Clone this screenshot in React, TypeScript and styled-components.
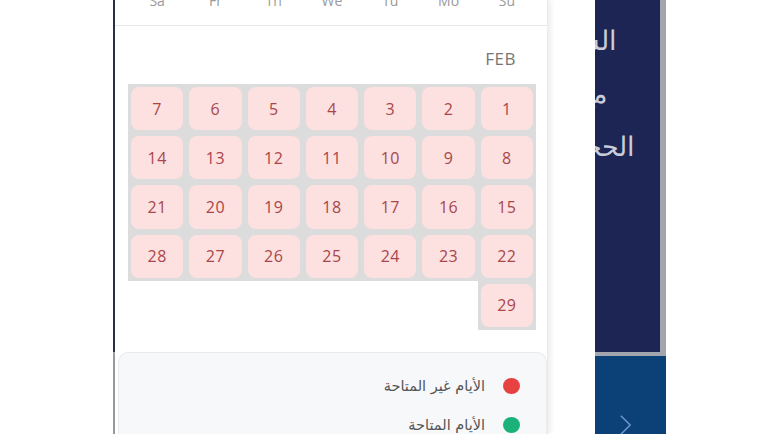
import React from "react";
import styled, { createGlobalStyle } from "styled-components";

const GlobalStyle = createGlobalStyle`
  html, body {
    margin: 0;
    padding: 0;
    background: #ffffff;
    overflow: hidden;
  }
  body {
    font-family: "Open Sans", "Noto Sans", "DejaVu Sans", sans-serif;
  }
`;

const weekDays = ["Su", "Mo", "Tu", "We", "Th", "Fr", "Sa"];
const days = Array.from({ length: 29 }, (_, i) => i + 1);

const heroLines = [
  { text: "السياحة", end: 43 },
  { text: "مع", end: 53 },
  { text: "الحجوزات", end: 25 },
];

const App = () => {
  return (
    <Page>
      <GlobalStyle />
      <Hero>
        <HeroTop>
          {heroLines.map((l) => (
            <HeroLine key={l.text} $end={l.end}>
              {l.text}
            </HeroLine>
          ))}
        </HeroTop>
        <HeroBottom>
          <Chevron viewBox="0 0 14 24">
            <path d="M2 2 L12 12 L2 22" />
          </Chevron>
        </HeroBottom>
      </Hero>

      <Sheet>
        <Modal>
          <Calendar>
            <WeekHeader>
              {weekDays.map((d) => (
                <WeekDay key={d}>{d}</WeekDay>
              ))}
            </WeekHeader>
            <MonthLabel>FEB</MonthLabel>
            <DaysGrid>
              {days.map((d) => (
                <Slot key={d}>
                  <DayCell>{d}</DayCell>
                </Slot>
              ))}
            </DaysGrid>
          </Calendar>

          <Legend>
            <LegendItem>
              <Dot $color="#e84141" />
              <LegendText>الأيام غير المتاحة</LegendText>
            </LegendItem>
            <LegendItem>
              <Dot $color="#1bb27a" />
              <LegendText>الأيام المتاحة</LegendText>
            </LegendItem>
          </Legend>
        </Modal>
      </Sheet>
    </Page>
  );
};

const Page = styled.div`
  position: relative;
  width: 772px;
  height: 434px;
  padding-left: 113px;
  box-sizing: border-box;
  overflow: hidden;
`;

const Hero = styled.div`
  width: 553px;
  height: 434px;
  display: flex;
  flex-direction: column;
`;

const HeroTop = styled.div`
  height: 352px;
  background: #1d2554;
  border-left: 2px solid #2b3048;
  border-right: 6px solid #a2a5ae;
  box-sizing: border-box;
  padding-top: 22px;
  display: flex;
  flex-direction: column;
  gap: 17px;
  direction: rtl;
`;

const HeroLine = styled.div<{ $end: number }>`
  padding-right: ${(p) => p.$end}px;
  font-size: 27px;
  line-height: 36px;
  color: #c9ccd9;
  font-weight: 300;
  white-space: nowrap;
`;

const HeroBottom = styled.div`
  flex: 1;
  background: #0c4177;
  border-top: 4px solid #a2a5ae;
  border-left: 2px solid #9a9a9a;
  display: flex;
  justify-content: flex-end;
  align-items: flex-end;
  padding-right: 34px;
`;

const Chevron = styled.svg`
  width: 13px;
  height: 24px;
  margin-bottom: -3px;
  fill: none;
  stroke: #6d98cc;
  stroke-width: 1.6;
`;

const Sheet = styled.div`
  position: absolute;
  top: 0;
  left: 115px;
  width: 480px;
  height: 434px;
  background: #ffffff;
`;

const Modal = styled.div`
  width: 433px;
  height: 100%;
  display: flex;
  flex-direction: column;
  box-shadow: 3px 0 5px rgba(0, 0, 0, 0.07);
  border-right: 1px solid #ececec;
  box-sizing: border-box;
`;

const Calendar = styled.div`
  padding: 0 11px 0 13px;
  direction: rtl;
`;

const WeekHeader = styled.div`
  display: grid;
  grid-template-columns: repeat(7, 1fr);
  margin: -9px -11px 0 -13px;
  padding: 0 11px 14px 13px;
  border-bottom: 1px solid #e6e6e6;
`;

const WeekDay = styled.div`
  text-align: center;
  font-size: 14px;
  line-height: 20px;
  color: #9a9a9a;
`;

const MonthLabel = styled.div`
  margin-top: 23px;
  padding-right: 20px;
  font-size: 17px;
  line-height: 20px;
  color: #767676;
  letter-spacing: 0.5px;
`;

const DaysGrid = styled.div`
  margin-top: 15px;
  display: grid;
  grid-template-columns: repeat(7, 1fr);
  grid-auto-rows: 49.2px;
`;

const Slot = styled.div`
  background: #dcdcdc;
  padding: 3px;
`;

const DayCell = styled.div`
  height: 100%;
  background: #fde0e0;
  border-radius: 8px;
  display: flex;
  align-items: center;
  justify-content: center;
  font-size: 16px;
  color: #a8474b;
  letter-spacing: 0.5px;
`;

const Legend = styled.div`
  margin: 22px 0 0 3px;
  flex: 1;
  background: #f7f8fa;
  border: 1px solid #ebebeb;
  border-bottom: none;
  border-radius: 10px 10px 0 0;
  padding: 21px 26px 0 0;
  display: flex;
  flex-direction: column;
  gap: 15px;
  direction: rtl;
`;

const LegendItem = styled.div`
  display: flex;
  align-items: center;
  gap: 18px;
  height: 24px;
`;

const Dot = styled.span<{ $color: string }>`
  width: 17px;
  height: 16px;
  border-radius: 50%;
  background: ${(p) => p.$color};
`;

const LegendText = styled.span`
  font-family: "DejaVu Sans", sans-serif;
  font-size: 14.5px;
  color: #555555;
`;

export default App;
